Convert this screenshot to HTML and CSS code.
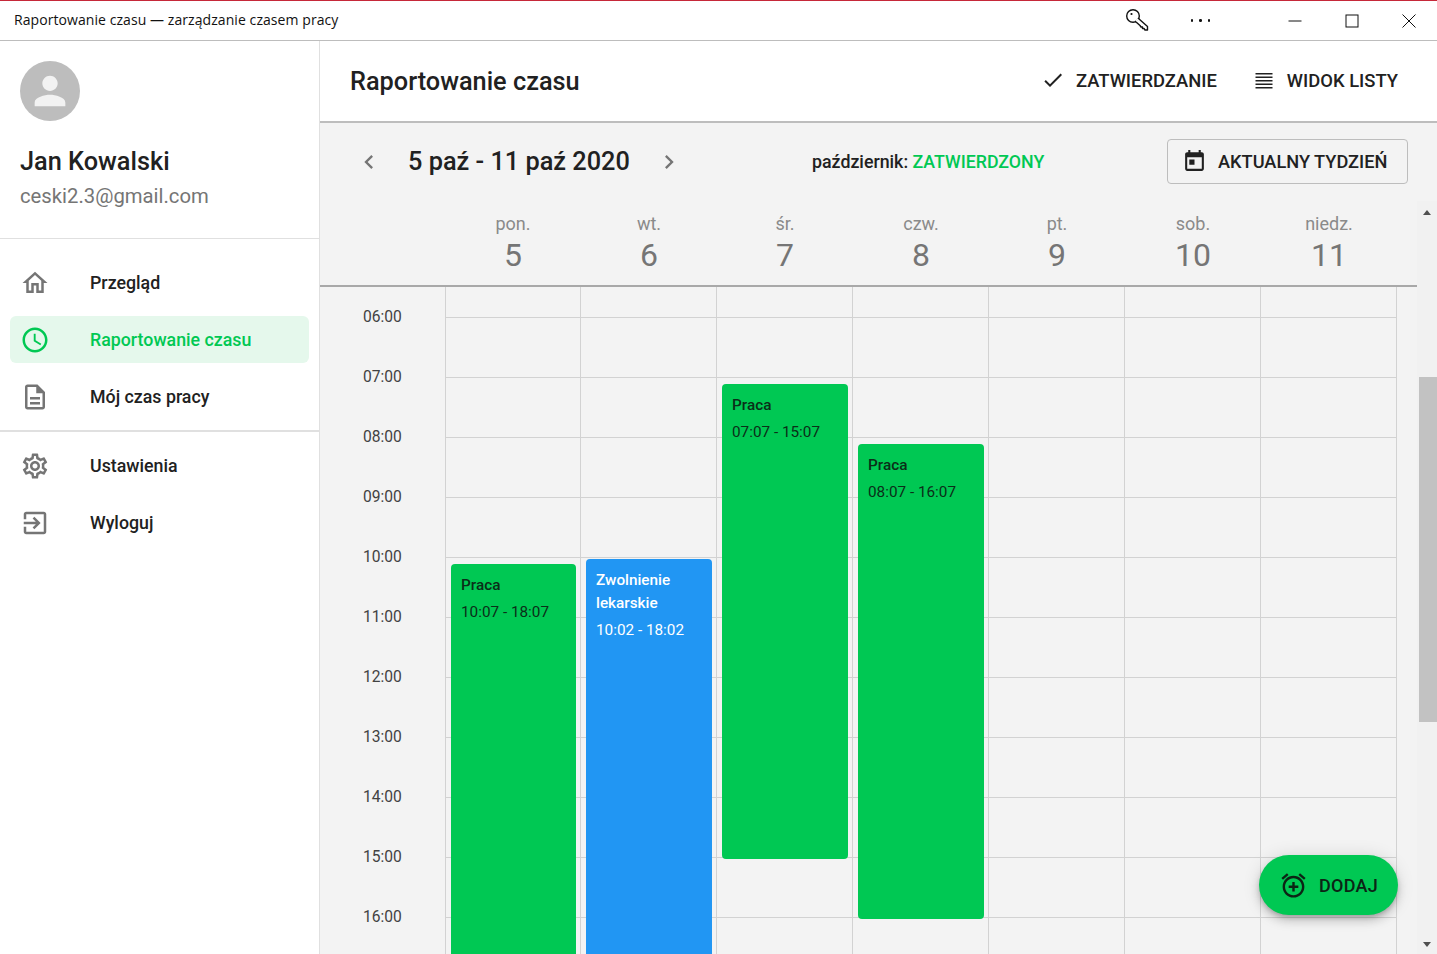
FILE: index.html
```html
<!DOCTYPE html>
<html lang="pl">
<head>
<meta charset="utf-8">
<title>Raportowanie czasu</title>
<link rel="stylesheet" href="styles.css">
</head>
<body>
<div class="app">
  <header class="titlebar">
    <span class="titlebar-text">Raportowanie czasu — zarządzanie czasem pracy</span>
    <div class="titlebar-tools">
      <svg class="tb-key" width="24" height="24" viewBox="0 0 24 24"><circle cx="8" cy="8" r="6.300" fill="#fff" stroke="#111" stroke-width="1.400"/><path d="M10.500 13.500 13.500 10.500 22.500 18.500V22H20L19 20.500H17.500V19H16L15 17.500z" fill="#fff" stroke="#111" stroke-width="1.400" stroke-linejoin="round"/><path d="M11 13 13 11" stroke="#fff" stroke-width="2"/><circle cx="6.500" cy="6" r="1.100" fill="#111"/></svg>
      <span class="tb-dots"><i></i><i></i><i></i></span>
    </div>
    <div class="window-controls">
      <span class="win-btn"><svg width="14" height="14" viewBox="0 0 14 14"><path d="M0.500 7h13" stroke="#111" fill="none"/></svg></span>
      <span class="win-btn"><svg width="14" height="14" viewBox="0 0 14 14"><rect x="1" y="1" width="12" height="12" stroke="#111" fill="none"/></svg></span>
      <span class="win-btn"><svg width="14" height="14" viewBox="0 0 14 14"><path d="M.5.5l13 13M13.500.5l-13 13" stroke="#111" fill="none"/></svg></span>
    </div>
  </header>
  <div class="main">
    <aside class="sidebar">
      <section class="profile">
        <div class="avatar">
          <svg width="46" height="46" viewBox="0 0 24 24"><path fill="#f2f2f2" d="M12 12c2.210 0 4-1.790 4-4s-1.790-4-4-4-4 1.790-4 4 1.790 4 4 4zm0 2c-2.670 0-8 1.340-8 4v2h16v-2c0-2.660-5.330-4-8-4z"/></svg>
        </div>
        <div class="profile-name">Jan Kowalski</div>
        <div class="profile-mail">ceski2.3@gmail.com</div>
      </section>
      <nav class="nav nav-top">
        <a class="nav-item"><svg class="nav-icon" viewBox="0 0 24 24"><path d="M12 5.690l5 4.500V18h-2v-6H9v6H7v-7.810l5-4.500M12 3L2 12h3v8h6v-6h2v6h6v-8h3L12 3z"/></svg><span>Przegląd</span></a>
        <a class="nav-item active"><svg class="nav-icon" viewBox="0 0 24 24"><path d="M11.990 2C6.470 2 2 6.480 2 12s4.470 10 9.990 10C17.520 22 22 17.520 22 12S17.520 2 11.990 2zM12 20c-4.420 0-8-3.580-8-8s3.580-8 8-8 8 3.580 8 8-3.580 8-8 8zm.500-13H11v6l5.250 3.150.750-1.230-4.500-2.670z"/></svg><span>Raportowanie czasu</span></a>
        <a class="nav-item"><svg class="nav-icon" viewBox="0 0 24 24"><path d="M8 16h8v2H8zm0-4h8v2H8zm6-10H6c-1.100 0-2 .900-2 2v16c0 1.100.890 2 1.990 2H18c1.100 0 2-.900 2-2V8l-6-6zm4 18H6V4h7v5h5v11z"/></svg><span>Mój czas pracy</span></a>
      </nav>
      <nav class="nav">
        <a class="nav-item"><svg class="nav-icon" viewBox="0 0 24 24"><path d="M19.430 12.980c.040-.320.070-.640.070-.980 0-.340-.030-.660-.070-.980l2.110-1.650c.190-.150.240-.420.120-.640l-2-3.460c-.090-.160-.260-.250-.440-.250-.060 0-.120.010-.170.030l-2.490 1c-.520-.400-1.080-.730-1.690-.980l-.380-2.650C14.460 2.180 14.250 2 14 2h-4c-.250 0-.460.180-.490.420l-.380 2.650c-.610.250-1.170.590-1.690.980l-2.490-1c-.060-.020-.120-.030-.180-.030-.170 0-.340.090-.430.250l-2 3.460c-.130.220-.070.490.120.640l2.110 1.650c-.040.320-.070.650-.070.980 0 .330.030.660.070.980l-2.110 1.650c-.190.150-.240.420-.120.640l2 3.460c.090.160.260.250.440.250.060 0 .120-.010.170-.030l2.490-1c.520.400 1.080.730 1.690.980l.380 2.650c.030.240.240.420.490.420h4c.250 0 .460-.180.490-.420l.380-2.650c.610-.250 1.170-.590 1.690-.980l2.490 1c.060.020.120.030.180.030.170 0 .340-.090.430-.250l2-3.460c.120-.220.070-.490-.120-.640l-2.110-1.650zm-1.980-1.710c.040.310.050.520.050.730 0 .210-.020.430-.050.730l-.140 1.130.890.700 1.080.840-.700 1.210-1.270-.510-1.040-.420-.900.680c-.430.320-.840.560-1.250.730l-1.060.430-.160 1.130-.200 1.350h-1.400l-.190-1.350-.160-1.130-1.060-.430c-.430-.180-.830-.410-1.230-.710l-.910-.700-1.060.430-1.270.510-.700-1.210 1.080-.840.890-.700-.140-1.130c-.030-.310-.050-.540-.050-.740s.020-.430.050-.730l.140-1.130-.890-.700-1.080-.840.700-1.210 1.270.510 1.040.420.900-.680c.430-.320.840-.560 1.250-.730l1.060-.430.160-1.130.200-1.350h1.390l.190 1.350.160 1.130 1.060.430c.430.180.830.410 1.230.710l.910.700 1.060-.430 1.270-.510.700 1.210-1.070.850-.890.700.140 1.130zM12 8c-2.210 0-4 1.790-4 4s1.790 4 4 4 4-1.790 4-4-1.790-4-4-4zm0 6c-1.100 0-2-.900-2-2s.900-2 2-2 2 .900 2 2-.900 2-2 2z"/></svg><span>Ustawienia</span></a>
        <a class="nav-item"><svg class="nav-icon" viewBox="0 0 24 24"><path d="M10.090 15.590L11.500 17l5-5-5-5-1.410 1.410L12.670 11H3v2h9.670l-2.580 2.590zM19 3H5c-1.110 0-2 .900-2 2v4h2V5h14v14H5v-4H3v4c0 1.100.890 2 2 2h14c1.100 0 2-.900 2-2V5c0-1.100-.900-2-2-2z"/></svg><span>Wyloguj</span></a>
      </nav>
    </aside>
    <main class="content">
      <div class="topbar">
        <h1 class="page-title">Raportowanie czasu</h1>
        <div class="topbar-actions">
          <button class="text-btn"><svg width="24" height="24" viewBox="0 0 24 24"><path fill="#212121" d="M9 16.200 4.800 12l-1.400 1.400L9 19 21 7l-1.400-1.400z"/></svg>ZATWIERDZANIE</button>
          <button class="text-btn"><svg width="24" height="24" viewBox="0 0 24 24"><path fill="#212121" d="M3.500 5h17v1.500h-17zM3.500 8.500h17V10h-17zM3.500 12h17v1.500h-17zM3.500 15.500h17V17h-17zM3.500 19h17v1.500h-17z"/></svg>WIDOK LISTY</button>
        </div>
      </div>
      <div class="toolbar">
        <svg class="chev" width="28" height="28" viewBox="0 0 24 24"><path fill="#757575" d="M15.410 7.410 14 6l-6 6 6 6 1.410-1.410L10.830 12z"/></svg>
        <div class="range">5 paź - 11 paź 2020</div>
        <svg class="chev chev-next" width="28" height="28" viewBox="0 0 24 24"><path fill="#757575" d="M8.590 16.590 10 18l6-6-6-6-1.410 1.410L13.170 12z"/></svg>
        <div class="month-state">październik: <b>ZATWIERDZONY</b></div>
        <button class="outline-btn"><svg width="25" height="25" viewBox="0 0 24 24"><path fill="#212121" d="M19 3h-1V1h-2v2H8V1H6v2H5c-1.110 0-2 .900-2 2v14c0 1.100.890 2 2 2h14c1.100 0 2-.900 2-2V5c0-1.100-.900-2-2-2zm0 16H5V8h14v11zM7 10h5v5H7z"/></svg>AKTUALNY TYDZIEŃ</button>
      </div>
      <div class="calendar">
        <div class="cal-body">
          <div class="week-head">
            <div class="wd"><span>pon.</span><strong>5</strong></div>
            <div class="wd"><span>wt.</span><strong>6</strong></div>
            <div class="wd"><span>śr.</span><strong>7</strong></div>
            <div class="wd"><span>czw.</span><strong>8</strong></div>
            <div class="wd"><span>pt.</span><strong>9</strong></div>
            <div class="wd"><span>sob.</span><strong>10</strong></div>
            <div class="wd"><span>niedz.</span><strong>11</strong></div>
          </div>
          <div class="grid">
            <div class="times">
              <span>06:00</span><span>07:00</span><span>08:00</span><span>09:00</span><span>10:00</span><span>11:00</span><span>12:00</span><span>13:00</span><span>14:00</span><span>15:00</span><span>16:00</span>
            </div>
            <div class="day">
              <div class="event green ev-mon"><div class="ev-title">Praca</div><div class="ev-time">10:07 - 18:07</div></div>
            </div>
            <div class="day">
              <div class="event blue ev-tue"><div class="ev-title">Zwolnienie lekarskie</div><div class="ev-time">10:02 - 18:02</div></div>
            </div>
            <div class="day">
              <div class="event green ev-wed"><div class="ev-title">Praca</div><div class="ev-time">07:07 - 15:07</div></div>
            </div>
            <div class="day">
              <div class="event green ev-thu"><div class="ev-title">Praca</div><div class="ev-time">08:07 - 16:07</div></div>
            </div>
            <div class="day"></div>
            <div class="day"></div>
            <div class="day"></div>
            <div class="day-end"></div>
          </div>
        </div>
        <div class="scrollbar">
          <div class="sb-up"></div>
          <div class="sb-thumb"></div>
          <div class="sb-down"></div>
        </div>
      </div>
      <button class="fab"><svg width="29" height="29" viewBox="0 0 24 24"><path fill="#0c2415" d="M22 5.720l-4.600-3.860-1.290 1.530 4.600 3.860L22 5.720zM7.880 3.390L6.600 1.860 2 5.710l1.290 1.530 4.590-3.850zM12 4c-4.970 0-9 4.030-9 9s4.020 9 9 9c4.970 0 9-4.030 9-9s-4.030-9-9-9zm0 16c-3.870 0-7-3.130-7-7s3.130-7 7-7 7 3.130 7 7-3.130 7-7 7zm1-11h-2v3H8v2h3v3h2v-3h3v-2h-3V9z"/></svg>DODAJ</button>
    </main>
  </div>
</div>
</body>
</html>
```
FILE: styles.css
```css
* { box-sizing: border-box; }
html, body { margin: 0; height: 100%; overflow: hidden; }
body { font-family: Roboto, "Noto Sans", sans-serif; color: #212121; background: #fff; }
.app { width: 1437px; height: 954px; display: flex; flex-direction: column; overflow: hidden; }

.titlebar { height: 41px; flex: none; display: flex; align-items: center; border-top: 1px solid #c62839; border-bottom: 1px solid #bdbdbd; background: #fff; padding-left: 14px; }
.titlebar-text { font-family: "Open Sans", "Noto Sans", sans-serif; font-size: 14px; color: #111; flex: 1; letter-spacing: .07px; margin-top: -2px; }
.titlebar-tools { display: flex; align-items: center; gap: 42px; margin-right: 56px; }
.tb-key { margin-top: -2px; }
.tb-dots { display: flex; gap: 6px; }
.tb-dots i { width: 2.500px; height: 2.500px; border-radius: 50%; background: #111; display: block; }
.window-controls { display: flex; }
.win-btn { width: 57px; height: 39px; display: flex; align-items: center; justify-content: center; }

.main { flex: 1; display: flex; min-height: 0; position: relative; }
.sidebar { width: 320px; flex: none; border-right: 1px solid #e0e0e0; background: #fff; }
.profile { padding: 20px 20px 0; height: 198px; border-bottom: 1px solid #e0e0e0; }
.avatar { width: 60px; height: 60px; border-radius: 50%; background: #bdbdbd; display: flex; align-items: center; justify-content: center; }
.profile-name { font-size: 25.300px; font-weight: 500; margin-top: 25px; line-height: 32px; }
.profile-mail { font-size: 20.300px; color: #757575; line-height: 28px; margin-top: 4px; }
.nav { padding: 20px 10px 0; }
.nav-top { height: 193px; border-bottom: 2px solid #e0e0e0; }
.nav + .nav { padding-top: 10px; }
.nav-item { display: flex; align-items: center; height: 47px; margin-bottom: 10px; border-radius: 6px; font-size: 17.800px; font-weight: 500; padding-left: 10px; color: #212121; }
.nav-icon { width: 30px; height: 30px; margin-right: 40px; flex: none; fill: #757575; }
.nav-item.active { background: #e5f8ec; color: #00c853; }
.nav-item.active .nav-icon { fill: #00c853; }

.content { flex: 1; min-width: 0; display: flex; flex-direction: column; background: #f3f3f3; position: relative; }
.topbar { height: 82px; flex: none; background: #fff; border-bottom: 2px solid #bdbdbd; display: flex; align-items: center; justify-content: space-between; padding: 0 39px 0 30px; }
.page-title { font-size: 25.300px; font-weight: 500; margin: 0; }
.topbar-actions { display: flex; gap: 35px; margin-top: -2px; }
.text-btn { border: 0; background: none; padding: 0; display: flex; align-items: center; gap: 11px; font: 500 18.400px Roboto, sans-serif; color: #212121; }

.toolbar { height: 78px; flex: none; display: flex; align-items: center; padding: 0 29px 1px 35px; }
.chev { flex: none; }
.range { font-size: 25.300px; font-weight: 500; margin-left: 25px; width: 222px; white-space: nowrap; }
.chev-next { margin-left: 25px; }
.month-state { font-size: 17.800px; font-weight: 500; margin-left: 129px; white-space: nowrap; }
.month-state b { font-weight: 500; color: #00c853; }
.outline-btn { height: 45px; width: 241px; border: 1px solid #bdbdbd; border-radius: 4px; background: none; display: flex; align-items: center; gap: 11px; padding: 0 0 0 14px; font: 500 18.200px Roboto, sans-serif; color: #212121; margin-left: auto; }

.calendar { flex: 1; min-height: 0; display: flex; }
.cal-body { width: 1097px; flex: none; display: flex; flex-direction: column; min-height: 0; }
.week-head { height: 86px; flex: none; border-bottom: 2px solid #a8a8a8; padding-left: 125px; display: grid; grid-template-columns: repeat(7, 136px); }
.wd { display: flex; flex-direction: column; align-items: center; }
.wd span { font-size: 18px; color: #8a8a8a; line-height: 26px; margin-top: 10px; }
.wd strong { font-size: 32px; font-weight: 400; color: #757575; line-height: 38px; margin-top: -1px; }

.grid { flex: 1; min-height: 0; display: grid; grid-template-columns: 125px 135px repeat(6, 136px) 21px; overflow: hidden; }
.times { display: flex; flex-direction: column; padding-top: 19px; }
.times span { height: 60px; flex: none; font-size: 15.600px; padding-left: 43px; line-height: 22px; color: #424242; }
.day { position: relative; border-left: 1px solid #d2d2d2; background-image: linear-gradient(to bottom, transparent 30px, #d2d2d2 30px, #d2d2d2 31px, transparent 31px); background-size: 100% 60px; background-repeat: repeat-y; }
.day-end { border-left: 1px solid #d2d2d2; }
.event { position: absolute; left: 5px; right: 4px; border-radius: 4px; padding: 10px 10px; font-size: 15.300px; }
.ev-title { font-weight: 500; line-height: 23px; }
.ev-time { line-height: 23px; margin-top: 4px; }
.green { background: #00c853; color: #0b2e18; }
.blue { background: #2196f3; color: #fff; }
.ev-mon { top: 277px; height: 700px; }
.ev-tue { top: 272px; height: 700px; }
.ev-wed { top: 97px; height: 475px; }
.ev-thu { top: 157px; height: 475px; }

.scrollbar { flex: 1; position: relative; background: #f1f1f1; }
.sb-thumb { position: absolute; left: 2px; right: 0; top: 176px; height: 345px; background: #c2c2c2; }
.sb-up, .sb-down { position: absolute; left: 6px; width: 0; height: 0; border-left: 4.500px solid transparent; border-right: 4.500px solid transparent; }
.sb-up { top: 9px; border-bottom: 5px solid #505050; }
.sb-down { bottom: 7px; border-top: 5px solid #505050; }

.fab { position: absolute; left: 939px; top: 814px; width: 139px; height: 60px; border: 0; border-radius: 30px; background: #00c853; display: flex; align-items: center; gap: 11px; padding: 0 0 0 20px; font: 500 18px Roboto, sans-serif; letter-spacing: .3px; color: #0c2415; box-shadow: 0 3px 5px -1px rgba(0,0,0,.2), 0 6px 10px 0 rgba(0,0,0,.14), 0 1px 18px 0 rgba(0,0,0,.12); }
```
